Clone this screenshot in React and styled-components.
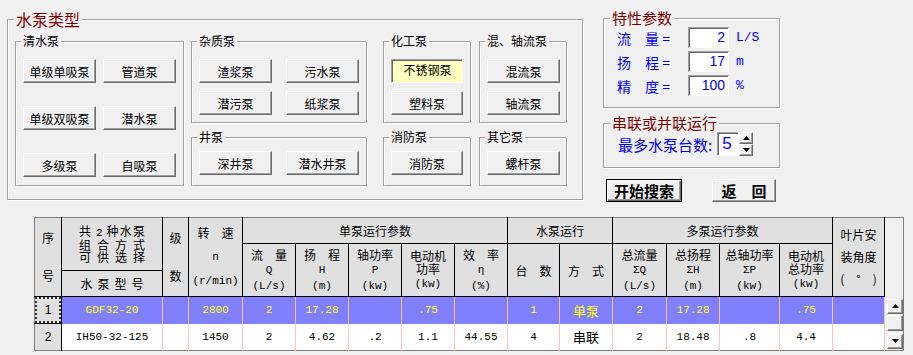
import React from "react"
import styled, { createGlobalStyle } from "styled-components"

const CJK = `"Noto Sans CJK SC", "Liberation Sans", sans-serif`
const MONO = `"Liberation Mono", "Noto Sans CJK SC", monospace`
const SANS = `"Liberation Sans", "Noto Sans CJK SC", sans-serif`

const GlobalStyle = createGlobalStyle`
  html, body { margin: 0; padding: 0; background: #f0f0f0; }
  body { font-family: ${CJK}; font-size: 12px; color: #000; }
  #root { width: 913px; height: 355px; overflow: hidden; }
`

const pumpGroups = [
    [{ title: "清水泵", w: 169, h: 145, cols: 2, bw: 73, cg: 7, rg: 23, mt: 11, items: ["单级单吸泵", "管道泵", "单级双吸泵", "潜水泵", "多级泵", "自吸泵"] }],
    [
        { title: "杂质泵", w: 176, h: 82, cols: 2, bw: 73, cg: 14, rg: 8, mt: 11, items: ["渣浆泵", "污水泵", "潜污泵", "纸浆泵"] },
        { title: "井泵", w: 176, h: 49, cols: 2, bw: 73, cg: 14, rg: 0, mt: 7, items: ["深井泵", "潜水井泵"] },
    ],
    [
        { title: "化工泵", w: 88, h: 82, cols: 1, bw: 72, rg: 8, mt: 11, items: ["不锈钢泵", "塑料泵"] },
        { title: "消防泵", w: 88, h: 49, cols: 1, bw: 72, rg: 0, mt: 7, items: ["消防泵"] },
    ],
    [
        { title: "混、轴流泵", w: 88, h: 82, cols: 1, bw: 73, rg: 8, mt: 11, items: ["混流泵", "轴流泵"] },
        { title: "其它泵", w: 88, h: 49, cols: 1, bw: 73, rg: 0, mt: 7, items: ["螺杆泵"] },
    ],
]
const colGaps = [0, 7, 16, 8]

const params = [
    { label: "流　量 =", value: "2", unit: "L/S" },
    { label: "扬　程 =", value: "17", unit: "m" },
    { label: "精　度 =", value: "100", unit: "%" },
]

const widths = [27, 101, 26, 54, 53, 53, 53, 53, 53, 52, 53, 54, 53, 60, 53, 52, 19]

const subHeads = [
    ["流　量", "Q", "(L/s)"],
    ["扬　程", "H", "(m)"],
    ["轴功率", "P", "(kw)"],
    ["电动机", "功率", "(kw)"],
    ["效　率", "η", "(%)"],
    ["台　数"],
    ["方　式"],
    ["总流量", "ΣQ", "(L/s)"],
    ["总扬程", "ΣH", "(m)"],
    ["总轴功率", "ΣP", "(kw)"],
    ["电动机", "总功率", "(kw)"],
]

const rows = [
    { no: 1, model: "GDF32-20", cells: ["", "2800", "2", "17.28", "", ".75", "", "1", "单泵", "2", "17.28", "", ".75", ""] },
    { no: 2, model: "IH50-32-125", cells: ["", "1450", "2", "4.62", ".2", "1.1", "44.55", "4", "串联", "2", "18.48", ".8", "4.4", ""] },
]

const isCJK = s => /[\u4e00-\u9fff]/.test(s)

function Arrow({ down }){
    return (
        <svg width="7" height="4" viewBox="0 0 7 4">
            <polygon points={down ? "0,0 7,0 3.5,4" : "0,4 7,4 3.5,0"} fill="#000"/>
        </svg>
    )
}

export default function App(){
    return (
        <Page>
            <GlobalStyle/>
            <Top>
                <Group $w={576} $h={181} $mt={1}>
                    <Legend $size={16} $lh={20} $mt={-11} $color="#800000">水泵类型</Legend>
                    <Columns>
                        {pumpGroups.map((col, ci) =>
                            <Col key={ci} $ml={colGaps[ci]}>
                                {col.map(g =>
                                    <Group key={g.title} $w={g.w} $h={g.h}>
                                        <Legend $size={12} $lh={14} $mt={-8} $ml={5}>{g.title}</Legend>
                                        <BtnGrid $cols={g.cols} $bw={g.bw} $cg={g.cg} $rg={g.rg} $mt={g.mt}>
                                            {g.items.map(name =>
                                                <PumpBtn key={name} $pressed={name === "不锈钢泵"}>{name}</PumpBtn>
                                            )}
                                        </BtnGrid>
                                    </Group>
                                )}
                            </Col>
                        )}
                    </Columns>
                </Group>

                <Side>
                    <Group $w={177} $h={90}>
                        <Legend $size={15} $lh={18} $mt={-10} $color="#800000">特性参数</Legend>
                        <ParamList>
                            {params.map(p =>
                                <ParamRow key={p.unit}>
                                    <ParamLabel>{p.label}</ParamLabel>
                                    <Sunken $w={41} $h={21}>{p.value}</Sunken>
                                    <Unit>{p.unit}</Unit>
                                </ParamRow>
                            )}
                        </ParamList>
                    </Group>
                    <Group $w={177} $h={45} $mt={15}>
                        <Legend $size={15} $lh={18} $mt={-10} $color="#800000">串联或并联运行</Legend>
                        <SpinRow>
                            <SpinLabel>最多水泵台数:</SpinLabel>
                            <SpinValue $w={22} $h={24}>5</SpinValue>
                            <SpinBtns>
                                <SpinBtn><Arrow/></SpinBtn>
                                <SpinBtn><Arrow down/></SpinBtn>
                            </SpinBtns>
                        </SpinRow>
                    </Group>
                    <Actions>
                        <ActionBtn $w={76} $default>开始搜索</ActionBtn>
                        <ActionBtn $w={64}>返　回</ActionBtn>
                    </Actions>
                </Side>
            </Top>

            <Grid>
                <colgroup>
                    {widths.map((w, i) => <GridCol key={i} $w={w}/>)}
                </colgroup>
                <thead>
                    <HeadRow $h={26}>
                        <Th rowSpan={3} $lh={38}>序<br/>号</Th>
                        <Th rowSpan={2} $lh={12}>
                            <Justify $w={66}>共 <Latin>2</Latin> 种水泵</Justify>
                            <Justify $w={66}>组 合 方 式</Justify>
                            <Justify $w={66}>可 供 选 择</Justify>
                        </Th>
                        <Th rowSpan={3} $lh={38}>级<br/>数</Th>
                        <Th rowSpan={3} $lh={22}>转　速<br/><Latin>n</Latin><br/><Latin>(r/min)</Latin></Th>
                        <Th colSpan={5}>单泵运行参数</Th>
                        <Th colSpan={2}>水泵运行</Th>
                        <Th colSpan={4}>多泵运行参数</Th>
                        <Th rowSpan={3} $lh={22}>叶片安<br/>装角度<br/>(　°　)</Th>
                        <Corner rowSpan={3}/>
                    </HeadRow>
                    <HeadRow $h={27}>
                        {subHeads.map((lines, i) =>
                            <Th key={i} rowSpan={2} $lh={13}>
                                {lines.map((l, j) =>
                                    <div key={j}>{isCJK(l) ? l : <Latin>{l}</Latin>}</div>
                                )}
                            </Th>
                        )}
                    </HeadRow>
                    <HeadRow $h={26}>
                        <Th><Justify $w={63}>水 泵 型 号</Justify></Th>
                    </HeadRow>
                </thead>
                <tbody>
                    {rows.map((r, ri) =>
                        <DataRow key={r.no} $h={27}>
                            <RowHead $last={ri === rows.length - 1}>
                                {ri === 0 ? <Focus>{r.no}</Focus> : r.no}
                            </RowHead>
                            <Td $sel={ri === 0}>{r.model}</Td>
                            {r.cells.map((c, ci) =>
                                <Td key={ci} $sel={ri === 0} $cjk={isCJK(c)}>{c}</Td>
                            )}
                            {ri === 0 &&
                                <ScrollCell rowSpan={2}>
                                    <Scroll>
                                        <ScrollBtn><Arrow/></ScrollBtn>
                                        <Thumb/>
                                        <ScrollBtn><Arrow down/></ScrollBtn>
                                    </Scroll>
                                </ScrollCell>
                            }
                        </DataRow>
                    )}
                </tbody>
            </Grid>
        </Page>
    )
}

const Page = styled.div`
    width: 913px;
    height: 355px;
    background: #f0f0f0;
`

const Top = styled.div`
    display: flex;
    align-items: flex-start;
    gap: 20px;
    height: 202px;
    box-sizing: border-box;
    padding: 18px 0 0 7px;
`

const Group = styled.div`
    box-sizing: border-box;
    width: ${p => p.$w}px;
    height: ${p => p.$h}px;
    margin-top: ${p => p.$mt || 0}px;
    border: 1px solid #a0a0a0;
    box-shadow: 1px 1px 0 #fff, inset 1px 1px 0 #fff;
`

const Legend = styled.div`
    width: fit-content;
    margin: ${p => p.$mt}px 0 0 ${p => p.$ml ?? 6}px;
    padding: 0 2px;
    background: #f0f0f0;
    font-size: ${p => p.$size}px;
    line-height: ${p => p.$lh}px;
    color: ${p => p.$color || "#000"};
    white-space: nowrap;
`

const Columns = styled.div`
    display: flex;
    align-items: flex-start;
    margin: 12px 0 0 7px;
`

const Col = styled.div`
    display: flex;
    flex-direction: column;
    gap: 14px;
    margin-left: ${p => p.$ml}px;
`

const BtnGrid = styled.div`
    display: grid;
    grid-template-columns: repeat(${p => p.$cols}, ${p => p.$bw}px);
    column-gap: ${p => p.$cg || 0}px;
    row-gap: ${p => p.$rg}px;
    margin: ${p => p.$mt}px 0 0 7px;
`

const PumpBtn = styled.button`
    box-sizing: border-box;
    height: 24px;
    margin: 0;
    padding: ${p => p.$pressed ? "0 0 3px 1px" : "0"};
    font: 12px ${CJK};
    color: #000;
    background: ${p => p.$pressed ? "#ffffc0" : "#f0f0f0"};
    border: 1px solid;
    border-color: ${p => p.$pressed ? "#a0a0a0 #fff #fff #a0a0a0" : "#fff #696969 #696969 #fff"};
    box-shadow: ${p => p.$pressed ? "inset 1px 1px 0 #696969" : "inset -1px -1px 0 #a0a0a0"};
`

const Side = styled.div`
    width: 177px;
    display: flex;
    flex-direction: column;
`

const ParamList = styled.div`
    display: flex;
    flex-direction: column;
    gap: 3px;
    margin-left: 13px;
`

const ParamRow = styled.div`
    display: flex;
    align-items: center;
    height: 21px;
`

const ParamLabel = styled.div`
    width: 71px;
    font-size: 14px;
    color: #0000ff;
    white-space: pre;
`

const Sunken = styled.div`
    box-sizing: border-box;
    width: ${p => p.$w}px;
    height: ${p => p.$h}px;
    background: #fff;
    border: 1px solid;
    border-color: #a0a0a0 #fff #fff #a0a0a0;
    box-shadow: inset 1px 1px 0 #696969;
    color: #0000ff;
    font: 14px ${SANS};
    line-height: ${p => p.$h - 3}px;
    text-align: right;
    padding-right: 3px;
`

const Unit = styled.div`
    margin-left: 7px;
    font: 13px ${MONO};
    color: #0000ff;
`

const SpinRow = styled.div`
    display: flex;
    align-items: center;
    margin-left: 14px;
    height: 24px;
`

const SpinLabel = styled.div`
    font-size: 15px;
    color: #0000ff;
    margin-right: 5px;
    white-space: nowrap;
`

const SpinValue = styled(Sunken)`
    font-size: 17px;
    text-align: left;
    padding: 0 0 0 4px;
`

const SpinBtns = styled.div`
    display: flex;
    flex-direction: column;
`

const SpinBtn = styled.div`
    box-sizing: border-box;
    width: 14px;
    height: 12px;
    display: flex;
    align-items: center;
    justify-content: center;
    background: #f0f0f0;
    border: 1px solid;
    border-color: #fff #696969 #696969 #fff;
    box-shadow: inset -1px -1px 0 #a0a0a0;
`

const Actions = styled.div`
    display: flex;
    gap: 30px;
    margin: 11px 0 0 3px;
`

const ActionBtn = styled.button`
    box-sizing: border-box;
    width: ${p => p.$w}px;
    height: 23px;
    margin: 0;
    padding: 0;
    font: bold 15px ${CJK};
    color: #000;
    background: #f0f0f0;
    border: 1px solid;
    border-color: ${p => p.$default ? "#000" : "#fff #696969 #696969 #fff"};
    box-shadow: ${p => p.$default
        ? "inset 1px 1px 0 #fff, inset -1px -1px 0 #696969, inset -2px -2px 0 #a0a0a0"
        : "inset -1px -1px 0 #a0a0a0"};
`

const Grid = styled.table`
    margin: 15px 0 0 34px;
    width: 869px;
    border-collapse: collapse;
    table-layout: fixed;
    border: 1px solid #808080;
    font: 12px ${CJK};
`

const GridCol = styled.col`
    width: ${p => p.$w}px;
`

const HeadRow = styled.tr`
    height: ${p => p.$h}px;
`

const Th = styled.th`
    padding: 0;
    background: #e0e0e0;
    font-weight: normal;
    text-align: center;
    vertical-align: middle;
    line-height: ${p => p.$lh || 14}px;
    border-right: 1px solid #000;
    border-bottom: 1px solid #000;
    overflow: hidden;
    white-space: nowrap;
`

const Corner = styled.th`
    padding: 0;
    background: #f0f0f0;
`

const Justify = styled.div`
    width: ${p => p.$w}px;
    margin: 0 auto;
    text-align: justify;
    text-align-last: justify;
    white-space: normal;
`

const Latin = styled.span`
    font-family: ${MONO};
    font-size: 11px;
`

const DataRow = styled.tr`
    height: ${p => p.$h}px;
`

const RowHead = styled.td`
    padding: 0;
    background: #e0e0e0;
    text-align: center;
    font: 12px ${SANS};
    border-right: 1px solid #000;
    border-bottom: ${p => p.$last ? "none" : "1px solid #000"};
`

const Focus = styled.div`
    box-sizing: border-box;
    height: 26px;
    border: 2px dotted #333;
    display: flex;
    align-items: center;
    justify-content: center;
`

const Td = styled.td`
    padding: 0;
    text-align: center;
    background: ${p => p.$sel ? "#8080ff" : "#fff"};
    color: ${p => p.$sel ? "#ffff00" : "#000"};
    font: ${p => p.$cjk ? `13px ${CJK}` : `11px ${MONO}`};
    border-right: 1px solid #ffc0c0;
    white-space: nowrap;
`

const ScrollCell = styled.td`
    padding: 0;
    background: #f0f0f0;
    vertical-align: top;
`

const Scroll = styled.div`
    display: flex;
    flex-direction: column;
    padding: 2px 0 0 2px;
`

const ScrollBtn = styled.div`
    box-sizing: border-box;
    width: 16px;
    height: 15px;
    display: flex;
    align-items: center;
    justify-content: center;
    background: #f0f0f0;
    border: 1px solid;
    border-color: #fff #696969 #696969 #fff;
    box-shadow: inset -1px -1px 0 #a0a0a0;
`

const Thumb = styled(ScrollBtn)`
    height: 16px;
    margin: 1px 0 3px;
`
